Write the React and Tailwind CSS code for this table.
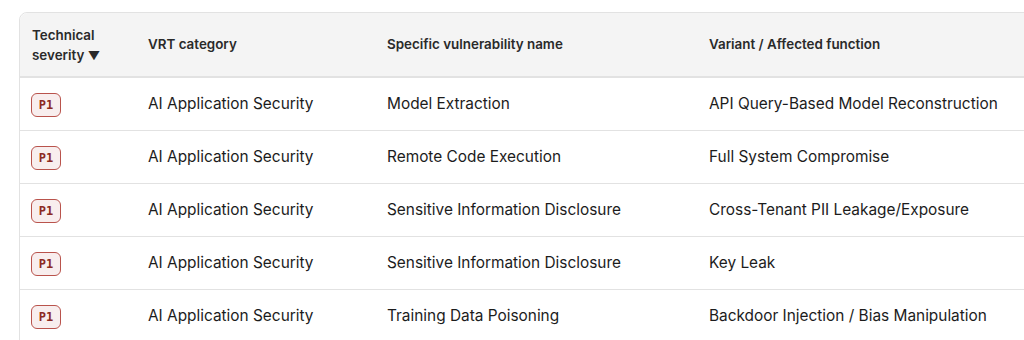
const rows = [
  ["Model Extraction", "API Query-Based Model Reconstruction"],
  ["Remote Code Execution", "Full System Compromise"],
  ["Sensitive Information Disclosure", "Cross-Tenant PII Leakage/Exposure"],
  ["Sensitive Information Disclosure", "Key Leak"],
  ["Training Data Poisoning", "Backdoor Injection / Bias Manipulation"],
];

function Badge() {
  return (
    <span
      className="inline-flex h-[24px] w-[30px] items-center justify-center rounded-[6px] border border-[#b9534c] bg-[#f8eeee] text-[12px] font-bold text-[#8c2a22]"
      style={{ fontFamily: "'DejaVu Sans Mono', monospace" }}
    >
      P1
    </span>
  );
}

export default function App() {
  return (
    <div
      className="h-[340px] w-[1024px] overflow-hidden bg-white pl-[19px] pt-[12px]"
      style={{ fontFamily: "Inter, 'Noto Sans', sans-serif" }}
    >
      <div className="w-[1060px] rounded-tl-[8px] border border-[#e2e2e2]">
        <div className="flex h-[65px] items-center rounded-tl-[8px] border-b-2 border-[#e2e2e2] bg-[#f4f4f4] text-[13.4px] font-semibold text-[#2a2a2a]">
          <div className="w-[116px] pl-[12px] pt-[2px] leading-[20px]">
            Technical
            <br />
            severity <span className="text-[12px]">▼</span>
          </div>
          <div className="w-[239px] pl-[12px]">VRT category</div>
          <div className="w-[322px] pl-[12px]">Specific vulnerability name</div>
          <div className="flex-1 pl-[12px]">Variant / Affected function</div>
        </div>
        {rows.map(([name, variant], i) => (
          <div
            key={i}
            className="flex h-[53px] items-center border-b border-[#e2e2e2] text-[15.4px] text-[#1c1c1c]"
          >
            <div className="w-[116px] pl-[11px]">
              <Badge />
            </div>
            <div className="w-[239px] pl-[12px]">AI Application Security</div>
            <div className="w-[322px] pl-[12px]">{name}</div>
            <div className="flex-1 pl-[12px]">{variant}</div>
          </div>
        ))}
      </div>
    </div>
  );
}
